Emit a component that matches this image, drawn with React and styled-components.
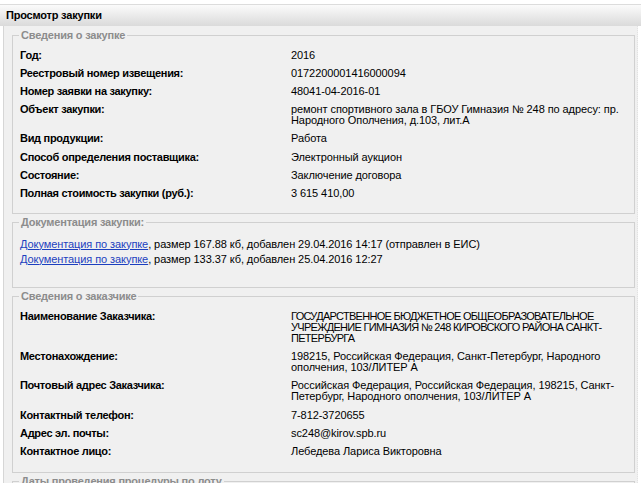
import styled, { createGlobalStyle } from "styled-components";

const GlobalStyle = createGlobalStyle`
  html, body {
    margin: 0;
    padding: 0;
    background: #ffffff;
  }
  body {
    font-family: "Liberation Sans", Arial, sans-serif;
    font-size: 11px;
    color: #000;
  }
`;

// multi-line values are kept as the lines shown in the page
const purchase = [
  ["Год:", ["2016"]],
  ["Реестровый номер извещения:", ["0172200001416000094"]],
  ["Номер заявки на закупку:", ["48041-04-2016-01"]],
  ["Объект закупки:", ["ремонт спортивного зала в ГБОУ Гимназия № 248 по адресу: пр.", "Народного Ополчения, д.103, лит.А"]],
  ["Вид продукции:", ["Работа"]],
  ["Способ определения поставщика:", ["Электронный аукцион"]],
  ["Состояние:", ["Заключение договора"]],
  ["Полная стоимость закупки (руб.):", ["3 615 410,00"]],
];

const customer = [
  ["Наименование Заказчика:", ["ГОСУДАРСТВЕННОЕ БЮДЖЕТНОЕ ОБЩЕОБРАЗОВАТЕЛЬНОЕ", "УЧРЕЖДЕНИЕ ГИМНАЗИЯ № 248 КИРОВСКОГО РАЙОНА САНКТ-", "ПЕТЕРБУРГА"], true],
  ["Местонахождение:", ["198215, Российская Федерация, Санкт-Петербург, Народного", "ополчения, 103/ЛИТЕР А"]],
  ["Почтовый адрес Заказчика:", ["Российская Федерация, Российская Федерация, 198215, Санкт-", "Петербург, Народного ополчения, 103/ЛИТЕР А"]],
  ["Контактный телефон:", ["7-812-3720655"]],
  ["Адрес эл. почты:", ["sc248@kirov.spb.ru"]],
  ["Контактное лицо:", ["Лебедева Лариса Викторовна"]],
];

const docs = [
  ["167.88", "29.04.2016 14:17 (отправлен в ЕИС)"],
  ["133.37", "25.04.2016 12:27"],
];

function InfoRows({ rows }) {
  return (
    <InfoGrid>
      {rows.map(([label, lines, caps]) => (
        <Row key={label}>
          <Label>{label}</Label>
          <Value $caps={caps}>
            {lines.map((line) => (
              <div key={line}>{line}</div>
            ))}
          </Value>
        </Row>
      ))}
    </InfoGrid>
  );
}

export default function App() {
  return (
    <>
      <GlobalStyle />
      <Header>Просмотр закупки</Header>
      <Panel>
        <Section $bottom={10}>
          <Legend>Сведения о закупке</Legend>
          <InfoRows rows={purchase} />
        </Section>

        <Section $bottom={20}>
          <Legend>Документация закупки:</Legend>
          <DocList>
            {docs.map(([size, date]) => (
              <DocLine key={size}>
                <DocLink href="#">Документация по закупке</DocLink>, размер {size} кб, добавлен {date}
              </DocLine>
            ))}
          </DocList>
        </Section>

        <Section $top={5}>
          <Legend>Сведения о заказчике</Legend>
          <InfoRows rows={customer} />
        </Section>

        <Section $bottom={20}>
          <Legend>Даты проведения процедуры по лоту</Legend>
        </Section>
      </Panel>
    </>
  );
}

const Header = styled.div`
  margin-top: 4px;
  height: 21px;
  border-top: 1px solid #dcdcdc;
  background: linear-gradient(#fbfbfb, #dadada);
  padding-left: 6px;
  font-weight: bold;
  font-size: 11px;
  line-height: 21px;
  letter-spacing: -0.2px;
  color: #000;
`;

const Panel = styled.div`
  margin: 0 3px;
  padding: 3px 2px 0 8px;
  background: #f0f0f0;
  border-left: 1px solid #d6d6d6;
  border-right: 1px dotted #e2e2e2;
`;

const Section = styled.fieldset`
  margin: 0 0 2px 0;
  padding: ${(p) => p.$top ?? 4}px 7px ${(p) => p.$bottom ?? 11}px 7px;
  border: 1px solid #d0d0d0;
  background: #f0f0f0;
  min-width: 0;
`;

const Legend = styled.legend`
  padding: 0 2px;
  margin-left: -1px;
  font-weight: bold;
  font-size: 11px;
  line-height: 13px;
  letter-spacing: -0.2px;
  color: #8c8c8c;
`;

const InfoGrid = styled.div`
  display: flex;
  flex-direction: column;
`;

const Row = styled.div`
  display: grid;
  grid-template-columns: 271px 1fr;
  padding: 3.6px 0;
  line-height: 11px;
`;

const Label = styled.div`
  font-weight: bold;
  letter-spacing: -0.3px;
`;

const Value = styled.div`
  white-space: nowrap;
  letter-spacing: ${(p) => (p.$caps ? "-0.7px" : "-0.08px")};
`;

const DocList = styled.div`
  display: flex;
  flex-direction: column;
  padding-top: 4px;
`;

const DocLine = styled.div`
  line-height: 15px;
  letter-spacing: -0.08px;
`;

const DocLink = styled.a`
  color: #1c3fbf;
  text-decoration: underline;
`;
